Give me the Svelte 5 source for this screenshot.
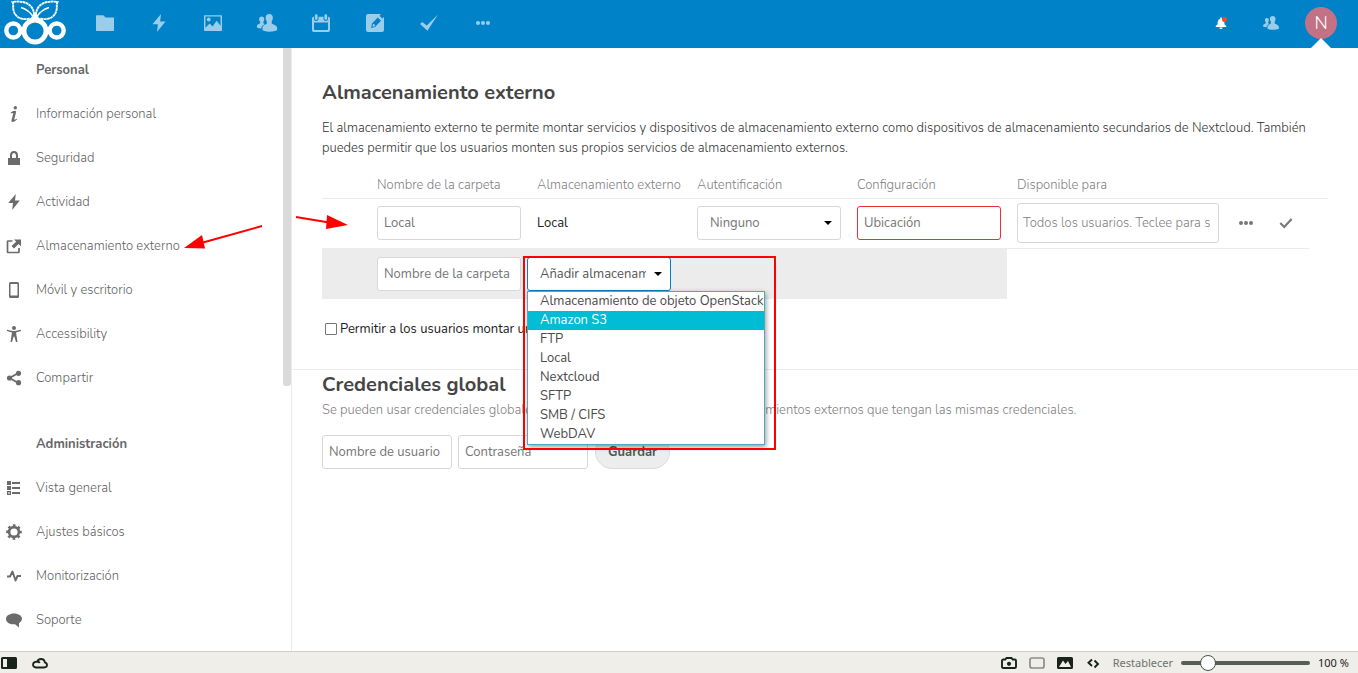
<script>
  const apps = [
    { icon: 'folder', label: 'Archivos' },
    { icon: 'bolt', label: 'Actividad' },
    { icon: 'picture', label: 'Galería' },
    { icon: 'people', label: 'Contactos' },
    { icon: 'calendar', label: 'Calendario' },
    { icon: 'note', label: 'Notas' },
    { icon: 'check', label: 'Tareas' },
    { icon: 'more', label: 'Más aplicaciones' }
  ];

  const personal = [
    { icon: 'info', label: 'Información personal' },
    { icon: 'lock', label: 'Seguridad' },
    { icon: 'bolt', label: 'Actividad' },
    { icon: 'external', label: 'Almacenamiento externo', marked: true },
    { icon: 'phone', label: 'Móvil y escritorio' },
    { icon: 'access', label: 'Accessibility' },
    { icon: 'share', label: 'Compartir' }
  ];

  const admin = [
    { icon: 'list', label: 'Vista general' },
    { icon: 'gear', label: 'Ajustes básicos' },
    { icon: 'pulse', label: 'Monitorización' },
    { icon: 'comment', label: 'Soporte' }
  ];

  const backends = [
    'Almacenamiento de objeto OpenStack',
    'Amazon S3',
    'FTP',
    'Local',
    'Nextcloud',
    'SFTP',
    'SMB / CIFS',
    'WebDAV'
  ];

  let active = $state(1);
  let zoom = $state(100);
</script>

{#snippet glyph(name, size)}
  <svg class="glyph" width={size} height={size} viewBox="0 0 16 16" fill="currentColor" aria-hidden="true">
    {#if name === 'folder'}
      <path d="M0 1.5Q0 1 .5 1H6.5L8.5 3H15.5Q16 3 16 3.5V14.5Q16 15 15.5 15H.5Q0 15 0 14.5Z" />
    {:else if name === 'bolt'}
      <path d="M9.8 0 2.2 9H7L6.2 16 13.8 6.6H9Z" />
    {:else if name === 'picture'}
      <path fill-rule="evenodd" d="M.6 1H15.4Q16 1 16 1.6V14.4Q16 15 15.4 15H.6Q0 15 0 14.4V1.6Q0 1 .6 1ZM1.3 2.3V12.2L5 8.4 7.6 11 11.2 6 14.7 10.5V2.3ZM4.2 3.2A1.7 1.7 0 1 1 4.2 6.6 1.7 1.7 0 0 1 4.2 3.2Z" />
    {:else if name === 'people'}
      <path d="M10 0C12 0 13.3 1.400 13.200 3.500 13.100 5 12.600 5.800 12.200 6.500V8.500C13.500 9.500 16.500 10 17 12V14.500Q14 16 9.500 15.800 6 15.700 4 14.500V12C4.300 10 7 9.500 7.800 8.500V6.500C7.300 5.800 6.900 5 6.800 3.500 6.700 1.400 8 0 10 0ZM3.200 2.200C4.700 2.200 5.600 3.200 5.600 4.600 5.600 5.700 5.200 6.300 4.800 6.900V8.300L6 9.100C4.300 9.900 3.200 10.600 2.900 12.800Q.3 12.800-1 12V10.500C-.5 9.200 1.300 9 1.900 8.300V6.900C1.400 6.300 1 5.700 1 4.600 1 3.200 1.900 2.200 3.200 2.200Z" />
    {:else if name === 'calendar'}
      <path fill-rule="evenodd" d="M2.500 1.500A1.200 1.200 0 0 1 5 1.500V4A1.200 1.200 0 0 1 2.500 4ZM11 1.500A1.200 1.200 0 0 1 13.500 1.500V4A1.200 1.200 0 0 1 11 4ZM1.200 2.500H1.700V4.200A2 2 0 0 0 5.800 4.200V2.500H10.200V4.200A2 2 0 0 0 14.300 4.200V2.500H14.800Q16 2.700 16 4V14.500Q16 16 14.500 16H1.500Q0 16 0 14.500V4Q0 2.700 1.200 2.500ZM1.800 7.600V13.500Q1.800 14.200 2.500 14.200H13.500Q14.200 14.200 14.200 13.500V7.600Z" />
    {:else if name === 'note'}
      <path fill-rule="evenodd" d="M1.800 0H13.400L12 1.600 14.400 4 16 2.600V14.200Q16 16 14.200 16H1.800Q0 16 0 14.200V1.800Q0 0 1.800 0ZM10.500 3 13.300 5.900 8 11.500 4.600 12.500 5.300 8.500ZM6.200 9 7 8.700 8.100 10.100 7.700 10.900 6.100 11.300 5.800 10.800Z" />
    {:else if name === 'check'}
      <path d="M0 8.800 2 7.200 6 10.200 16 .4 6.600 14.800Z" />
    {:else if name === 'tick'}
      <path fill="none" stroke="currentColor" stroke-width="2.500" d="M1.500 8 6 12.500 14.500 3.500" />
    {:else if name === 'more'}
      <circle cx="3" cy="8" r="2" /><circle cx="8" cy="8" r="2" /><circle cx="13" cy="8" r="2" />
    {:else if name === 'bell'}
      <path d="M7 .8H9V2.200Q12 3 12.500 6.500V9.500L15 12V13.200H1V12L3.500 9.500V6.500Q4 3 7 2.200ZM5.800 14H10.200Q10 16 8 16T5.800 14Z" />
    {:else if name === 'info'}
      <path d="M9.300 0a1.700 1.700 0 1 1 0 3.400 1.700 1.700 0 0 1 0-3.400ZM4.500 6.700Q6.600 5 9 4.800 10.400 4.700 10 6.500L8.300 13Q8.200 14 9 13.700L10.600 12.800 11 13.500Q8.800 15.700 6.600 16 5 16 5.500 14.200L7.200 7.800Q7.400 6.900 6.600 7.100L5 7.600Z" />
    {:else if name === 'lock'}
      <path fill-rule="evenodd" d="M8 1Q12 1 12 5.500V8H14V15H2V8H4V5.500Q4 1 8 1ZM8 3Q6 3 6 5.500V8H10V5.500Q10 3 8 3Z" />
    {:else if name === 'external'}
      <path d="M8 1.500H15V8.500L12.600 6.100 8 10.500 5.500 8 10.200 3.700Z" /><path d="M6.500 3H2Q1.500 3 1.500 3.500V14Q1.500 14.500 2 14.500H12.500Q13 14.500 13 14V10" fill="none" stroke="currentColor" stroke-width="1.700" />
    {:else if name === 'phone'}
      <path fill-rule="evenodd" d="M4.500 0H11.500Q13 0 13 1.500V14.500Q13 16 11.500 16H4.500Q3 16 3 14.500V1.500Q3 0 4.500 0ZM4.500 2V13.500H11.500V2Z" />
    {:else if name === 'access'}
      <circle cx="8" cy="2" r="2" /><path d="M1 3.800 7 5H9L15 3.800V5L10 6.500 11.500 16H10L8.300 10.500H7.700L6 16H4.500L6 6.500 1 5Z" />
    {:else if name === 'share'}
      <path d="M12.500 3 3.500 8 12.500 13" fill="none" stroke="currentColor" stroke-width="1.900" /><circle cx="12.500" cy="3.300" r="2.600" /><circle cx="3.500" cy="8" r="2.600" /><circle cx="12.500" cy="12.700" r="2.600" />
    {:else if name === 'list'}
      <path fill-rule="evenodd" d="M1 1H5V5H1ZM1 6H5V10H1ZM1 11H5V15H1ZM2.300 12.300V13.700H3.700V12.300ZM6 2H14V4H6ZM6 7H14V9H6ZM6 12H14V14H6Z" />
    {:else if name === 'gear'}
      <circle cx="8" cy="8" r="4.900" fill="none" stroke="currentColor" stroke-width="2.600" /><circle cx="8" cy="8" r="6.600" fill="none" stroke="currentColor" stroke-width="2.400" stroke-dasharray="2.592 2.592" stroke-dashoffset="1.296" />
    {:else if name === 'pulse'}
      <path d="M1 8.500H4L6.500 3.500 9.500 12.500 11.500 8H15" fill="none" stroke="currentColor" stroke-width="1.900" stroke-linejoin="round" />
    {:else if name === 'comment'}
      <path d="M8 1.500C12.500 1.500 16 3.800 16 7Q16 9.500 13 11.300L13 15.500 9 12.300C4 12.700 0 10.500 0 7 0 3.800 3.500 1.500 8 1.500Z" />
    {:else if name === 'panel'}
      <path fill-rule="evenodd" d="M1.500 2H14.500Q16 2 16 3.500V12.500Q16 14 14.500 14H1.500Q0 14 0 12.500V3.500Q0 2 1.500 2ZM2 4V12H6V4Z" />
    {:else if name === 'cloud'}
      <path d="M4 12.500H12Q15 12.300 15 10 15 8 12.800 7.400 12.500 4 9 4 6.300 4 5.300 6.500 1 6.800 1 9.800 1.200 12.300 4 12.500ZM5.300 6.500Q7 6.500 7.700 8" fill="none" stroke="currentColor" stroke-width="1.800" />
    {:else if name === 'camera'}
      <path fill="none" stroke="currentColor" stroke-width="1.900" d="M2.300 4.500H4.300L5.500 3H10.500L11.700 4.500H13.700Q15 4.500 15 5.800V11.700Q15 13 13.700 13H2.300Q1 13 1 11.700V5.800Q1 4.500 2.300 4.500Z" /><circle cx="8" cy="8.800" r="2.100" />
    {:else if name === 'frame'}
      <rect x="1" y="3" width="14" height="10" rx="2" fill="none" stroke="currentColor" stroke-width="1.700" />
    {:else if name === 'image'}
      <path fill-rule="evenodd" d="M1.500 2H14.500Q16 2 16 3.500V12.500Q16 14 14.500 14H1.500Q0 14 0 12.500V3.500Q0 2 1.500 2ZM2 12H14L11 6 8.500 9 6 5.500Z" />
    {:else if name === 'code'}
      <path fill="none" stroke="currentColor" stroke-width="1.900" d="M7 4.500 3.500 7.800 7 11M9.500 5.500 13 9 9.500 12.500" />
    {/if}
  </svg>
{/snippet}

{#snippet navItem(item)}
  <li>
    <a href="#settings">{@render glyph(item.icon, 16)}<span>{item.label}</span></a>
    {#if item.marked}
      <svg class="nav-arrow" width="80" height="26" viewBox="0 0 80 26" aria-hidden="true">
        <path d="M79 2 20 18.500" stroke="#f00" stroke-width="2" />
        <path d="M1 24 19 11 22 24.500Z" fill="#f00" />
      </svg>
    {/if}
  </li>
{/snippet}

<div class="app">
  <header>
    <a class="logo" href="#home" aria-label="Inicio">
      <svg width="64" height="47" viewBox="0 0 64 47" fill="none" stroke="#fff" aria-hidden="true">
        <circle cx="32" cy="31" r="11" stroke-width="4.800" />
        <circle cx="10.300" cy="30.500" r="7" stroke-width="4.400" />
        <circle cx="53.700" cy="30.500" r="7" stroke-width="4.400" />
        <path d="M32 13 36.500 20H27.500Z" fill="#fff" stroke-width="1.500" />
        <path d="M31 15C31 5 22 0 9.500 2 11 5 9.500 7 10.500 10 12 18 20 20.500 27 18.500" stroke-width="1.900" stroke-dasharray="2.800 .4" />
        <path d="M33 15C33 5 42 0 54.500 2 53 5 54.500 7 53.500 10 52 18 44 20.500 37 18.500" stroke-width="1.900" stroke-dasharray="2.800 .4" />
        <path d="M18 7.500Q26 10 30.500 17M46 7.500Q38 10 33.500 17" stroke-width="1.400" />
      </svg>
    </a>
    <nav class="apps" aria-label="Aplicaciones">
      {#each apps as app}
        <a href="#app" aria-label={app.label}>{@render glyph(app.icon, app.icon === 'more' ? 16 : 18)}</a>
      {/each}
    </nav>
    <div class="tools">
      <button class="bell" aria-label="Notificaciones">{@render glyph('bell', 12)}<i></i></button>
      <button class="contacts" aria-label="Contactos">{@render glyph('people', 14)}</button>
      <button class="user" aria-label="Ajustes"><span>N</span></button>
    </div>
  </header>

  <div class="body">
    <aside>
      <h3>Personal</h3>
      <ul>
        {#each personal as item}{@render navItem(item)}{/each}
      </ul>
      <h3 class="second">Administración</h3>
      <ul>
        {#each admin as item}{@render navItem(item)}{/each}
      </ul>
      <div class="thumb"></div>
    </aside>

    <main>
      <section class="storage">
        <h2>Almacenamiento externo</h2>
        <p class="intro">El almacenamiento externo te permite montar servicios y dispositivos de almacenamiento externo como dispositivos de almacenamiento secundarios de Nextcloud. También puedes permitir que los usuarios monten sus propios servicios de almacenamiento externos.</p>
        <table>
          <colgroup>
            <col class="c-state" /><col class="c-main" /><col class="c-main" /><col class="c-main" /><col class="c-main" />
            <col class="c-users" /><col class="c-more" /><col class="c-save" /><col />
          </colgroup>
          <thead>
            <tr>
              <th></th>
              <th>Nombre de la carpeta</th>
              <th>Almacenamiento externo</th>
              <th>Autentificación</th>
              <th>Configuración</th>
              <th>Disponible para</th>
              <th></th><th></th><th></th>
            </tr>
          </thead>
          <tbody>
            <tr class="mount">
              <td class="state">
                <svg class="row-arrow" width="54" height="18" viewBox="0 0 54 18" aria-hidden="true">
                  <path d="M1 3 34 8.500" stroke="#f00" stroke-width="2" />
                  <path d="M53 11 32 1 31 15Z" fill="#f00" />
                </svg>
              </td>
              <td><input class="field" type="text" value="Local" aria-label="Nombre de la carpeta" /></td>
              <td>Local</td>
              <td>
                <div class="select">
                  <select aria-label="Autentificación"><option>Ninguno</option></select>
                </div>
              </td>
              <td><input class="field invalid" type="text" placeholder="Ubicación" aria-label="Ubicación" /></td>
              <td><input class="field users" type="text" placeholder="Todos los usuarios. Teclee para s" aria-label="Disponible para" /></td>
              <td class="act"><button aria-label="Opciones">{@render glyph('more', 16)}</button></td>
              <td class="act"><button aria-label="Guardar montaje">{@render glyph('tick', 14)}</button></td>
            </tr>
            <tr class="add">
              <td></td>
              <td><input class="field" type="text" placeholder="Nombre de la carpeta" aria-label="Nueva carpeta" /></td>
              <td class="picker">
                <div class="select open">
                  <select aria-label="Añadir almacenamiento"><option>Añadir almacenamiento</option></select>
                  <ul role="listbox" aria-label="Tipos de almacenamiento">
                    {#each backends as name, i}
                      <li role="option" aria-selected={active === i} onmouseenter={() => (active = i)}>{name}</li>
                    {/each}
                  </ul>
                  <div class="mark"></div>
                </div>
              </td>
              <td></td>
              <td></td>
            </tr>
          </tbody>
        </table>
        <label class="allow"><input type="checkbox" />Permitir a los usuarios montar un almacenamiento externo</label>
      </section>

      <section class="creds">
        <h2>Credenciales global</h2>
        <p>Se pueden usar credenciales globales para autenticar con múltiples almacenamientos externos que tengan las mismas credenciales.</p>
        <form onsubmit={(e) => e.preventDefault()}>
          <input class="field" type="text" placeholder="Nombre de usuario" aria-label="Nombre de usuario" />
          <input class="field" type="password" placeholder="Contraseña" aria-label="Contraseña" />
          <button>Guardar</button>
        </form>
      </section>
    </main>
  </div>

  <footer>
    <button aria-label="Panel">{@render glyph('panel', 16)}</button>
    <button class="sync" aria-label="Sincronización">{@render glyph('cloud', 16)}</button>
    <div class="status">
      <button aria-label="Capturar">{@render glyph('camera', 16)}</button>
      <button class="dim" aria-label="Mosaico">{@render glyph('frame', 16)}</button>
      <button aria-label="Imágenes">{@render glyph('image', 16)}</button>
      <button aria-label="Acciones de página">{@render glyph('code', 16)}</button>
      <button class="reset" onclick={() => (zoom = 100)}>Restablecer</button>
      <input type="range" min="20" max="500" bind:value={zoom} aria-label="Zoom" />
      <output>{zoom} %</output>
    </div>
  </footer>
</div>

<style>
  :global(body) { margin: 0; }
  .app {
    height: 100vh;
    display: flex;
    flex-direction: column;
    overflow: hidden;
    background: #fff;
    color: #222;
    font-family: Nunito, Lato, sans-serif;
    font-size: 13px;
    line-height: 20px;
  }
  .app *, .app *::before, .app *::after { box-sizing: border-box; }
  a { color: inherit; text-decoration: none; }
  button, input, select { font: inherit; color: inherit; margin: 0; }
  button { border: 0; padding: 0; background: none; display: flex; align-items: center; justify-content: center; }
  .glyph { display: block; flex: none; overflow: visible; }
  ul { list-style: none; margin: 0; padding: 0; }

  header { height: 48px; flex: none; display: flex; background: #0082c9; color: #fff; padding-right: 12px; }
  .logo { width: 75px; padding-left: 3px; flex: none; margin-right: 3px; }
  .logo svg { display: block; }
  .apps { display: flex; }
  .apps a { width: 54px; padding-bottom: 2px; display: flex; align-items: center; justify-content: center; opacity: .6; }
  .tools { margin-left: auto; display: flex; }
  .tools button { width: 50px; padding-bottom: 2px; position: relative; }
  .bell i { position: absolute; left: 26px; top: 17px; width: 5px; height: 5px; border-radius: 50%; background: #f44a1d; }
  .contacts .glyph { opacity: .6; }
  .user span { width: 32px; height: 32px; border-radius: 50%; background: #c37285; font-size: 18px; font-weight: 300; line-height: 32px; }
  .user::after { content: ''; position: absolute; bottom: 0; left: 15px; border: 10px solid transparent; border-top: 0; border-bottom-color: #fff; }

  .body { flex: 1; min-height: 0; display: flex; }
  aside { width: 292px; flex: none; position: relative; overflow: hidden; border-right: 1px solid #ebebeb; color: #5f5f5f; font-weight: 300; }
  h3 { margin: 0; padding-left: 36px; font-size: 13px; line-height: 44px; color: #666; }
  .second { margin-top: 22px; }
  aside li { position: relative; }
  aside a { display: flex; align-items: center; gap: 14px; height: 44px; padding-left: 6px; }
  aside .glyph { color: #6b6b6b; width: 16px; height: 16px; }
  .nav-arrow { position: absolute; left: 183px; top: 0; }
  .thumb { position: absolute; right: 0; top: 0; width: 8px; height: 56%; background: #dadada; border-radius: 0 0 3px 3px; }

  main { flex: 1; min-width: 0; }
  section { padding: 0 30px; }
  .storage { padding-top: 30px; padding-bottom: 30px; border-bottom: 1px solid #ebebeb; }
  h2 { margin: 0; font-size: 20px; line-height: 30px; color: #454545; }
  .intro { margin: 10px 0 11px; color: #333; font-weight: 300; }

  table { width: 100%; table-layout: fixed; border-collapse: separate; border-spacing: 0; }
  .c-state { width: 45px; }
  .c-main { width: 160px; }
  .c-users { width: 222px; }
  .c-more { width: 34px; }
  .c-save { width: 46px; }
  th, td { padding: 0 0 0 10px; text-align: left; white-space: nowrap; }
  th { height: 30px; padding-top: 2px; border-bottom: 1px solid #ebebeb; font-weight: 300; color: #808080; }
  td { height: 50px; vertical-align: middle; }
  .mount td { border-bottom: 1px solid #ebebeb; padding-bottom: 1px; }
  .state { position: relative; }
  .row-arrow { position: absolute; left: -27px; top: 15px; }
  .add td { background: #ececec; }
  td.picker { padding: 0; }
  td.act { padding: 0; color: #777; }
  .act button { width: 100%; height: 32px; padding-bottom: 1px; }

  .field {
    display: block;
    width: 144px;
    height: 34px;
    padding: 0 6px;
    border: 1px solid #d8d8d8;
    border-radius: 3px;
    background: #fff;
    color: #757575;
    outline: 0;
  }
  .field::placeholder { color: #757575; opacity: 1; }
  td .users { width: 202px; height: 40px; padding: 0 5px; font-weight: 300; }
  .users::placeholder { color: #808080; }
  .invalid { border-color: #e9322d; }

  .select { position: relative; width: 144px; height: 34px; }
  .select select {
    appearance: none;
    display: block;
    width: 100%;
    height: 100%;
    padding: 0 24px 0 12px;
    border: 1px solid #d8d8d8;
    border-radius: 3px;
    background: #fff;
    color: #757575;
    outline: 0;
  }
  .select::after { content: ''; position: absolute; right: 9px; top: 15px; border: 4px solid transparent; border-top-color: #000; border-bottom: 0; }
  .open select { border-color: #0082c9; color: #555; }
  .open ul { position: absolute; z-index: 2; left: 0; top: 34px; width: 238px; border: 1px solid #4badbb; background: #fff; color: #4a4a4a; box-shadow: 1px 2px 5px rgba(0, 0, 0, .4); }
  .open li { height: 19px; line-height: 18px; padding-left: 12px; white-space: nowrap; }
  .open li[aria-selected='true'] { background: #00bcd4; color: #fff; }
  .mark { position: absolute; z-index: 3; left: -4px; top: -1px; width: 253px; height: 194px; border: 2px solid #f00; pointer-events: none; }

  .allow { display: flex; align-items: center; gap: 3px; margin-top: 20px; padding-left: 3px; }
  .allow input { appearance: none; width: 12px; height: 12px; border: 1px solid #767676; border-radius: 1px; background: #fff; }
  .allow input:checked { background: #0082c9; }

  .creds p { margin: 0 0 15px; color: #808080; font-weight: 300; }
  form { display: flex; gap: 6px; }
  form .field { width: 130px; }
  form button { height: 34px; margin-left: 1px; padding: 0 12px; border: 1px solid #dbdbdb; border-radius: 17px; background: #ededed; color: #555; font-weight: 700; }

  footer {
    height: 22px;
    flex: none;
    display: flex;
    align-items: center;
    gap: 15px;
    padding: 0 7px 0 1px;
    border-top: 1px solid #cfcfca;
    background: #efeee9;
    color: #18241b;
    font-family: "Noto Sans", sans-serif;
    font-size: 11px;
  }
  .status { display: flex; align-items: center; gap: 12px; margin-left: auto; }
  .dim { color: #8a8f89; }
  .reset { color: #6c746d; }
  input[type='range'] { appearance: none; width: 129px; height: 16px; margin-left: -4px; background: none; }
  input[type='range']::-webkit-slider-runnable-track { height: 4px; border-radius: 2px; background: #556055; }
  input[type='range']::-webkit-slider-thumb { appearance: none; width: 16px; height: 16px; margin-top: -6px; border: 1px solid #445045; border-radius: 50%; background: #fff; }
  output { margin-left: -4px; min-width: 33px; white-space: nowrap; }
</style>
